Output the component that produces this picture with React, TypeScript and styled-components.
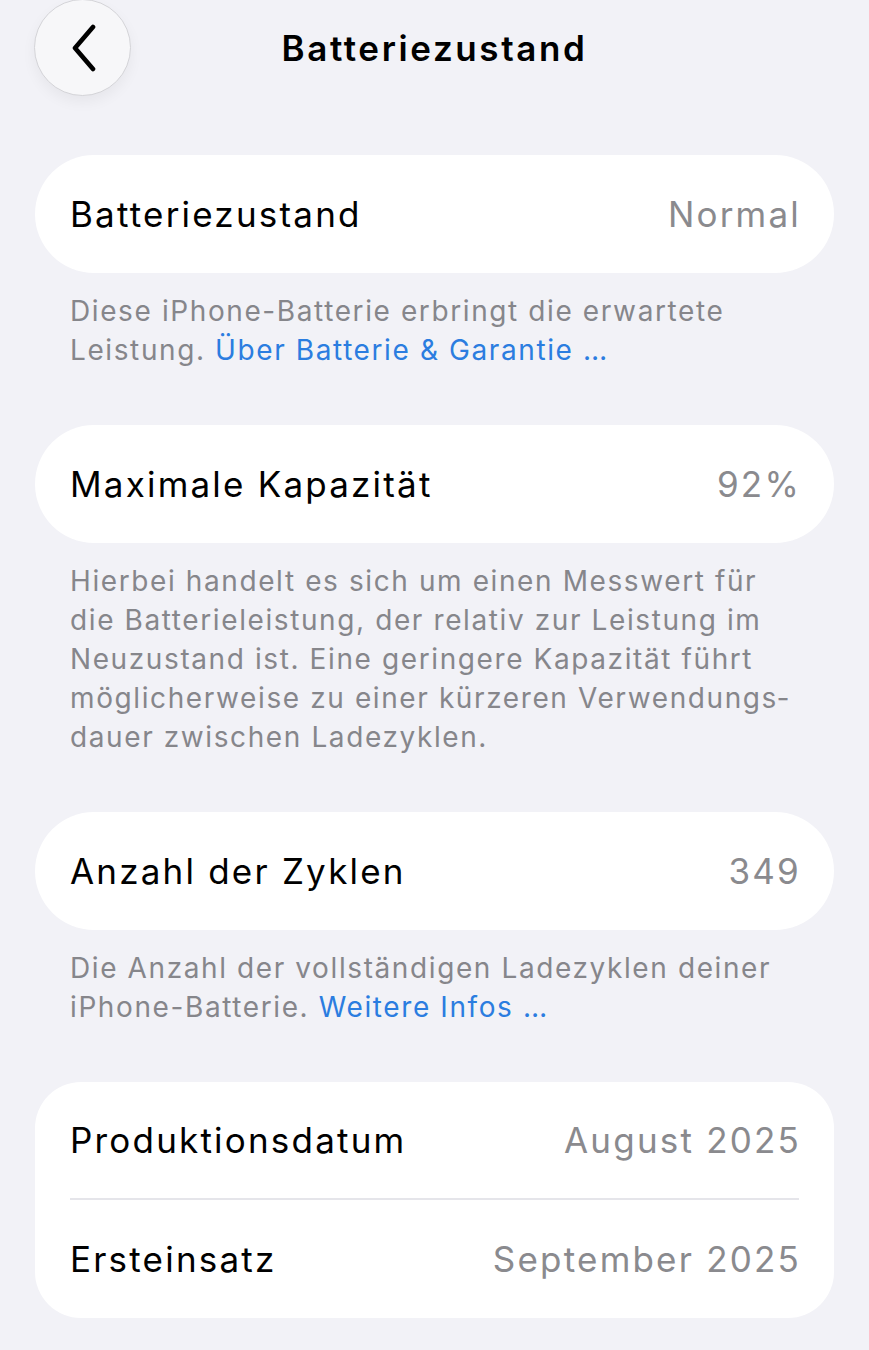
import React from "react";
import styled, { createGlobalStyle } from "styled-components";

const Global = createGlobalStyle`
  html, body { margin: 0; padding: 0; background: #f2f2f7; }
  body { font-family: Inter, "Noto Sans", "Liberation Sans", sans-serif; -webkit-font-smoothing: antialiased; }
  * { box-sizing: border-box; }
`;

const Page = styled.div`
  width: 869px;
  min-height: 1350px;
  background: #f2f2f7;
  padding: 0 35px 40px;
  display: flex;
  flex-direction: column;
`;

const Header = styled.header`
  position: relative;
  height: 96px;
  display: flex;
  align-items: center;
  justify-content: center;
  margin-bottom: 59px;
`;

const BackButton = styled.button`
  position: absolute;
  left: -1px;
  top: -1px;
  width: 97px;
  height: 97px;
  border-radius: 50%;
  border: 1px solid #d4d4d8;
  background: #f7f7f9;
  box-shadow: 0 6px 14px rgba(0, 0, 0, 0.05);
  display: flex;
  align-items: center;
  justify-content: center;
  padding: 0;
`;

const Title = styled.h1`
  margin: 0;
  font-size: 35px;
  font-weight: 600;
  color: #000;
  letter-spacing: 2.6px;
`;

const Card = styled.div<{ $radius: number }>`
  background: #fff;
  border-radius: ${(p) => p.$radius}px;
  padding: 0 35px;
  display: flex;
  flex-direction: column;
`;

const Row = styled.div<{ $divider?: boolean }>`
  height: ${(p) => (p.$divider ? 118 : 118)}px;
  display: flex;
  align-items: center;
  justify-content: space-between;
  font-size: 35px;
  letter-spacing: 2.2px;
  border-bottom: ${(p) => (p.$divider ? "2px solid #e5e5ea" : "none")};
`;

const Label = styled.span`
  color: #000;
`;

const Value = styled.span`
  color: #8a8a8e;
  margin-right: -2px;
`;

const Footer = styled.p`
  margin: 19px 35px 55px;
  font-size: 28px;
  line-height: 39px;
  color: #86868b;
  letter-spacing: 1.6px;
  hyphens: manual;
`;

const Link = styled.a`
  color: #2b7de0;
  text-decoration: none;
`;

export default function App() {
  return (
    <Page>
      <Global />
      <Header>
        <BackButton aria-label="Zurück">
          <svg width="34" height="48" viewBox="0 0 34 48" fill="none">
            <path d="M27 3 L9 24 L27 45" stroke="#000" strokeWidth="4.6" strokeLinecap="round" strokeLinejoin="round" />
          </svg>
        </BackButton>
        <Title>Batteriezustand</Title>
      </Header>

      <Card $radius={59}>
        <Row>
          <Label>Batteriezustand</Label>
          <Value>Normal</Value>
        </Row>
      </Card>
      <Footer>
        Diese iPhone-Batterie erbringt die erwartete Leistung. <Link>Über Batterie &amp; Garantie …</Link>
      </Footer>

      <Card $radius={59}>
        <Row>
          <Label>Maximale Kapazität</Label>
          <Value>92%</Value>
        </Row>
      </Card>
      <Footer>
        Hierbei handelt es sich um einen Messwert für die Batterieleistung, der relativ zur Leistung im Neuzustand ist. Eine geringere Kapazität führt möglicherweise zu einer kürzeren Verwendungs{"\u00AD"}dauer zwischen Ladezyklen.
      </Footer>

      <Card $radius={59}>
        <Row>
          <Label>Anzahl der Zyklen</Label>
          <Value>349</Value>
        </Row>
      </Card>
      <Footer>
        Die Anzahl der vollständigen Ladezyklen deiner iPhone-Batterie. <Link>Weitere Infos …</Link>
      </Footer>

      <Card $radius={46}>
        <Row $divider>
          <Label>Produktionsdatum</Label>
          <Value>August 2025</Value>
        </Row>
        <Row>
          <Label>Ersteinsatz</Label>
          <Value>September 2025</Value>
        </Row>
      </Card>
    </Page>
  );
}
